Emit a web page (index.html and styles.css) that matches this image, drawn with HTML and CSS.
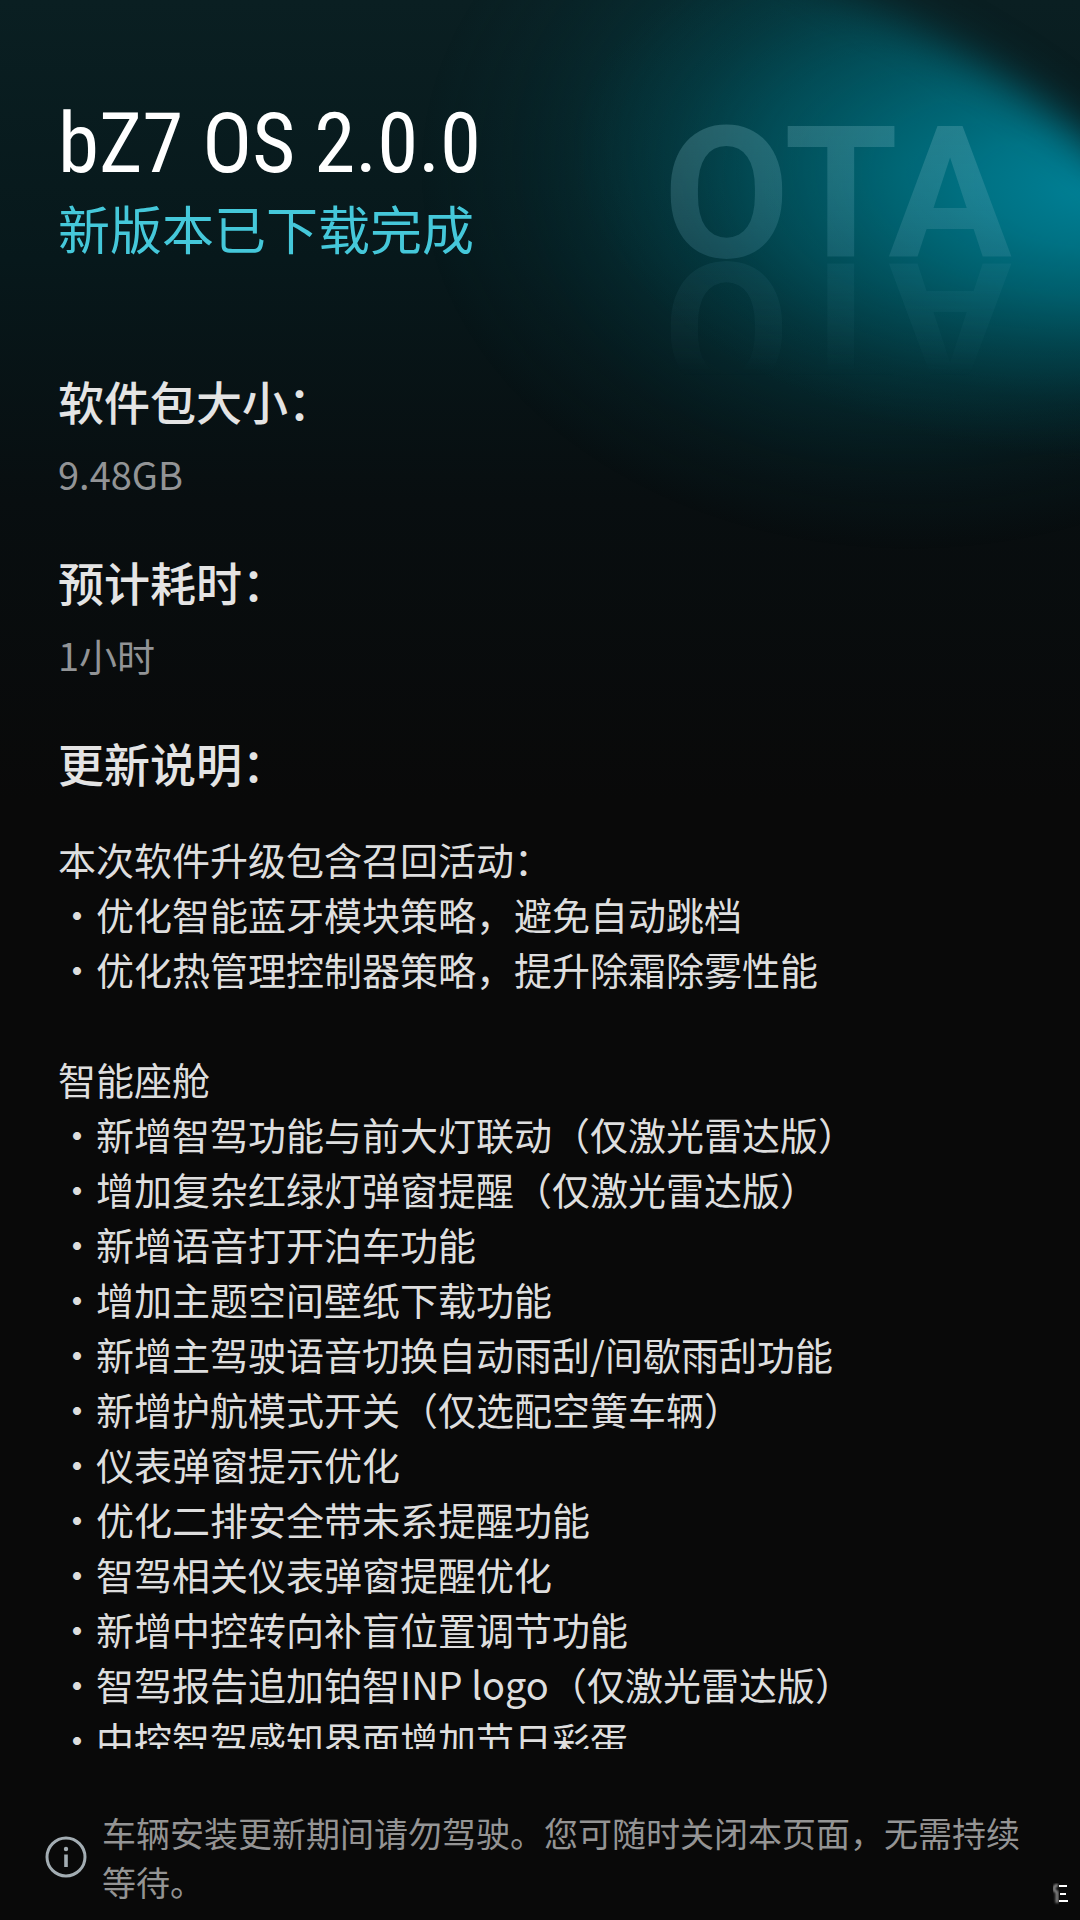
FILE: index.html
```html
<!DOCTYPE html>
<html lang="zh-CN">
<head>
    <meta charset="UTF-8">
    <meta name="viewport" content="width=device-width, initial-scale=1.0">
    <title>bZ7 OS 2.0.0</title>
    <link rel="stylesheet" href="styles.css">
</head>
<body>
    <!-- Background light -->
    <svg class="glow" viewBox="0 0 680 640" aria-hidden="true">
        <defs>
            <radialGradient id="light" gradientUnits="userSpaceOnUse" cx="0" cy="0" r="1" gradientTransform="translate(690 190) rotate(6) scale(520 270)">
                <stop offset="0" stop-color="#008096"/>
                <stop offset="0.2" stop-color="#00778a" stop-opacity="0.94"/>
                <stop offset="0.4" stop-color="#006c7c" stop-opacity="0.76"/>
                <stop offset="0.6" stop-color="#006270" stop-opacity="0.44"/>
                <stop offset="0.8" stop-color="#005864" stop-opacity="0.16"/>
                <stop offset="1" stop-color="#00525c" stop-opacity="0"/>
            </radialGradient>
            <radialGradient id="haze" gradientUnits="userSpaceOnUse" cx="0" cy="0" r="1" gradientTransform="translate(510 170) scale(490 380)">
                <stop offset="0" stop-color="#006672" stop-opacity="0.64"/>
                <stop offset="0.3" stop-color="#005e6a" stop-opacity="0.54"/>
                <stop offset="0.6" stop-color="#00525c" stop-opacity="0.3"/>
                <stop offset="0.8" stop-color="#004a54" stop-opacity="0.12"/>
                <stop offset="1" stop-color="#00424c" stop-opacity="0"/>
            </radialGradient>
            <filter id="soft" x="-30%" y="-30%" width="160%" height="160%">
                <feGaussianBlur stdDeviation="22"/>
            </filter>
            <mask id="edge" maskUnits="userSpaceOnUse" x="0" y="0" width="680" height="640">
                <rect width="680" height="640" fill="#fff"/>
                <path d="M300 -100 L430 -16 Q590 54 690 142 L800 240 L800 -100 Z" fill="#000" filter="url(#soft)"/>
            </mask>
        </defs>
        <g mask="url(#edge)">
            <rect width="680" height="640" fill="url(#haze)"/>
            <rect width="680" height="640" fill="url(#light)"/>
        </g>
    </svg>

    <header class="header">
        <div>
            <h1 class="title">bZ7 OS 2.0.0</h1>
            <p class="subtitle">新版本已下载完成</p>
        </div>
        <div class="ota">OTA</div>
    </header>

    <main class="content">
        <section class="info">
            <h2 class="heading">软件包大小：</h2>
            <p class="value">9.48GB</p>
        </section>
        <section class="info">
            <h2 class="heading">预计耗时：</h2>
            <p class="value">1小时</p>
        </section>
        <section class="notes">
            <h2 class="heading">更新说明：</h2>
            <div class="note-group">
                <h3 class="note-title">本次软件升级包含召回活动：</h3>
                <ul class="note-list">
                    <li>优化智能蓝牙模块策略，避免自动跳档</li>
                    <li>优化热管理控制器策略，提升除霜除雾性能</li>
                </ul>
            </div>
            <div class="note-group">
                <h3 class="note-title">智能座舱</h3>
                <ul class="note-list">
                    <li>新增智驾功能与前大灯联动（仅激光雷达版）</li>
                    <li>增加复杂红绿灯弹窗提醒（仅激光雷达版）</li>
                    <li>新增语音打开泊车功能</li>
                    <li>增加主题空间壁纸下载功能</li>
                    <li>新增主驾驶语音切换自动雨刮/间歇雨刮功能</li>
                    <li>新增护航模式开关（仅选配空簧车辆）</li>
                    <li>仪表弹窗提示优化</li>
                    <li>优化二排安全带未系提醒功能</li>
                    <li>智驾相关仪表弹窗提醒优化</li>
                    <li>新增中控转向补盲位置调节功能</li>
                    <li>智驾报告追加铂智INP logo（仅激光雷达版）</li>
                    <li>中控智驾感知界面增加节日彩蛋</li>
                </ul>
            </div>
        </section>
    </main>

    <footer class="footer">
        <svg class="info-icon" viewBox="0 0 42 42" aria-hidden="true">
            <circle cx="21" cy="21" r="19" fill="none" stroke="#a3adb3" stroke-width="3"/>
            <circle cx="21" cy="13" r="2.2" fill="#a3adb3"/>
            <path d="M21 18.5v12.5" stroke="#a3adb3" stroke-width="3.6"/>
        </svg>
        <p class="footer-text">车辆安装更新期间请勿驾驶。您可随时关闭本页面，无需持续等待。</p>
        <svg class="corner-mark" viewBox="0 0 20 24" aria-hidden="true">
            <defs>
                <filter id="smear"><feGaussianBlur stdDeviation="1"/></filter>
            </defs>
            <path d="M8 3 Q3 4 4 8 L7 10 V21" fill="none" stroke="#888" stroke-width="3" filter="url(#smear)"/>
            <path d="M9 4h8M10 12h6M9 19h9" stroke="#fff" stroke-width="2"/>
        </svg>
    </footer>
</body>
</html>
```

FILE: styles.css
```css
/* Reset and base styles */
* {
    margin: 0;
    padding: 0;
    box-sizing: border-box;
}
body {
    position: relative;
    display: flex;
    flex-direction: column;
    height: 100vh;
    overflow: hidden;
    font-family: "Noto Sans CJK SC", sans-serif;
    font-size: 38px;
    line-height: 55px;
    color: #dedede;
    background: linear-gradient(#0a1f22 0, #07181b 260px, #080e10 500px, #090909 800px);
}
.glow {
    position: absolute;
    top: 0;
    right: 0;
    width: 680px;
    height: 640px;
    z-index: -1;
}

/* Header */
.header {
    display: flex;
    justify-content: space-between;
    align-items: flex-start;
    padding: 98px 68px 0 58px;
}
.title {
    font-family: "Roboto Condensed", "Liberation Sans Narrow", "Noto Sans CJK SC", sans-serif;
    font-size: 83px;
    font-weight: 400;
    line-height: 92px;
    color: #fff;
}
.subtitle {
    margin-top: 6px;
    font-size: 52px;
    line-height: 64px;
    color: #45c8da;
}
.ota {
    margin-top: 24px;
    padding-top: 4px;
    font-family: Roboto, sans-serif;
    font-size: 184px;
    font-weight: bold;
    line-height: 136px;
    color: transparent;
    background: linear-gradient(rgba(130, 190, 200, 0.28), rgba(90, 155, 175, 0.22));
    -webkit-background-clip: text;
    background-clip: text;
    -webkit-box-reflect: below -4px linear-gradient(transparent 15%, rgba(0, 0, 0, 0.45));
}

/* Content */
.content {
    flex: 1;
    min-height: 0;
    overflow: hidden;
    padding: 108px 58px 0;
}
.heading {
    font-size: 46px;
    font-weight: 500;
    line-height: 60px;
    color: #e4e4e4;
}
.info {
    margin-bottom: 50px;
}
.value {
    margin-top: 16px;
    color: #929496;
}
.note-group {
    margin-top: 55px;
}
.heading + .note-group {
    margin-top: 39px;
}
.note-title {
    font-size: 38px;
    font-weight: normal;
}
.note-list {
    list-style: none;
}
.note-list li::before {
    content: "・";
}

/* Footer */
.footer {
    display: flex;
    align-items: center;
    gap: 15px;
    padding: 59px 10px 14px 45px;
}
.info-icon {
    flex: none;
    width: 42px;
    height: 42px;
}
.footer-text {
    flex: 1;
    font-size: 34px;
    line-height: 49px;
    color: #949494;
}
.corner-mark {
    flex: none;
    align-self: flex-end;
    width: 20px;
    height: 24px;
}
```
